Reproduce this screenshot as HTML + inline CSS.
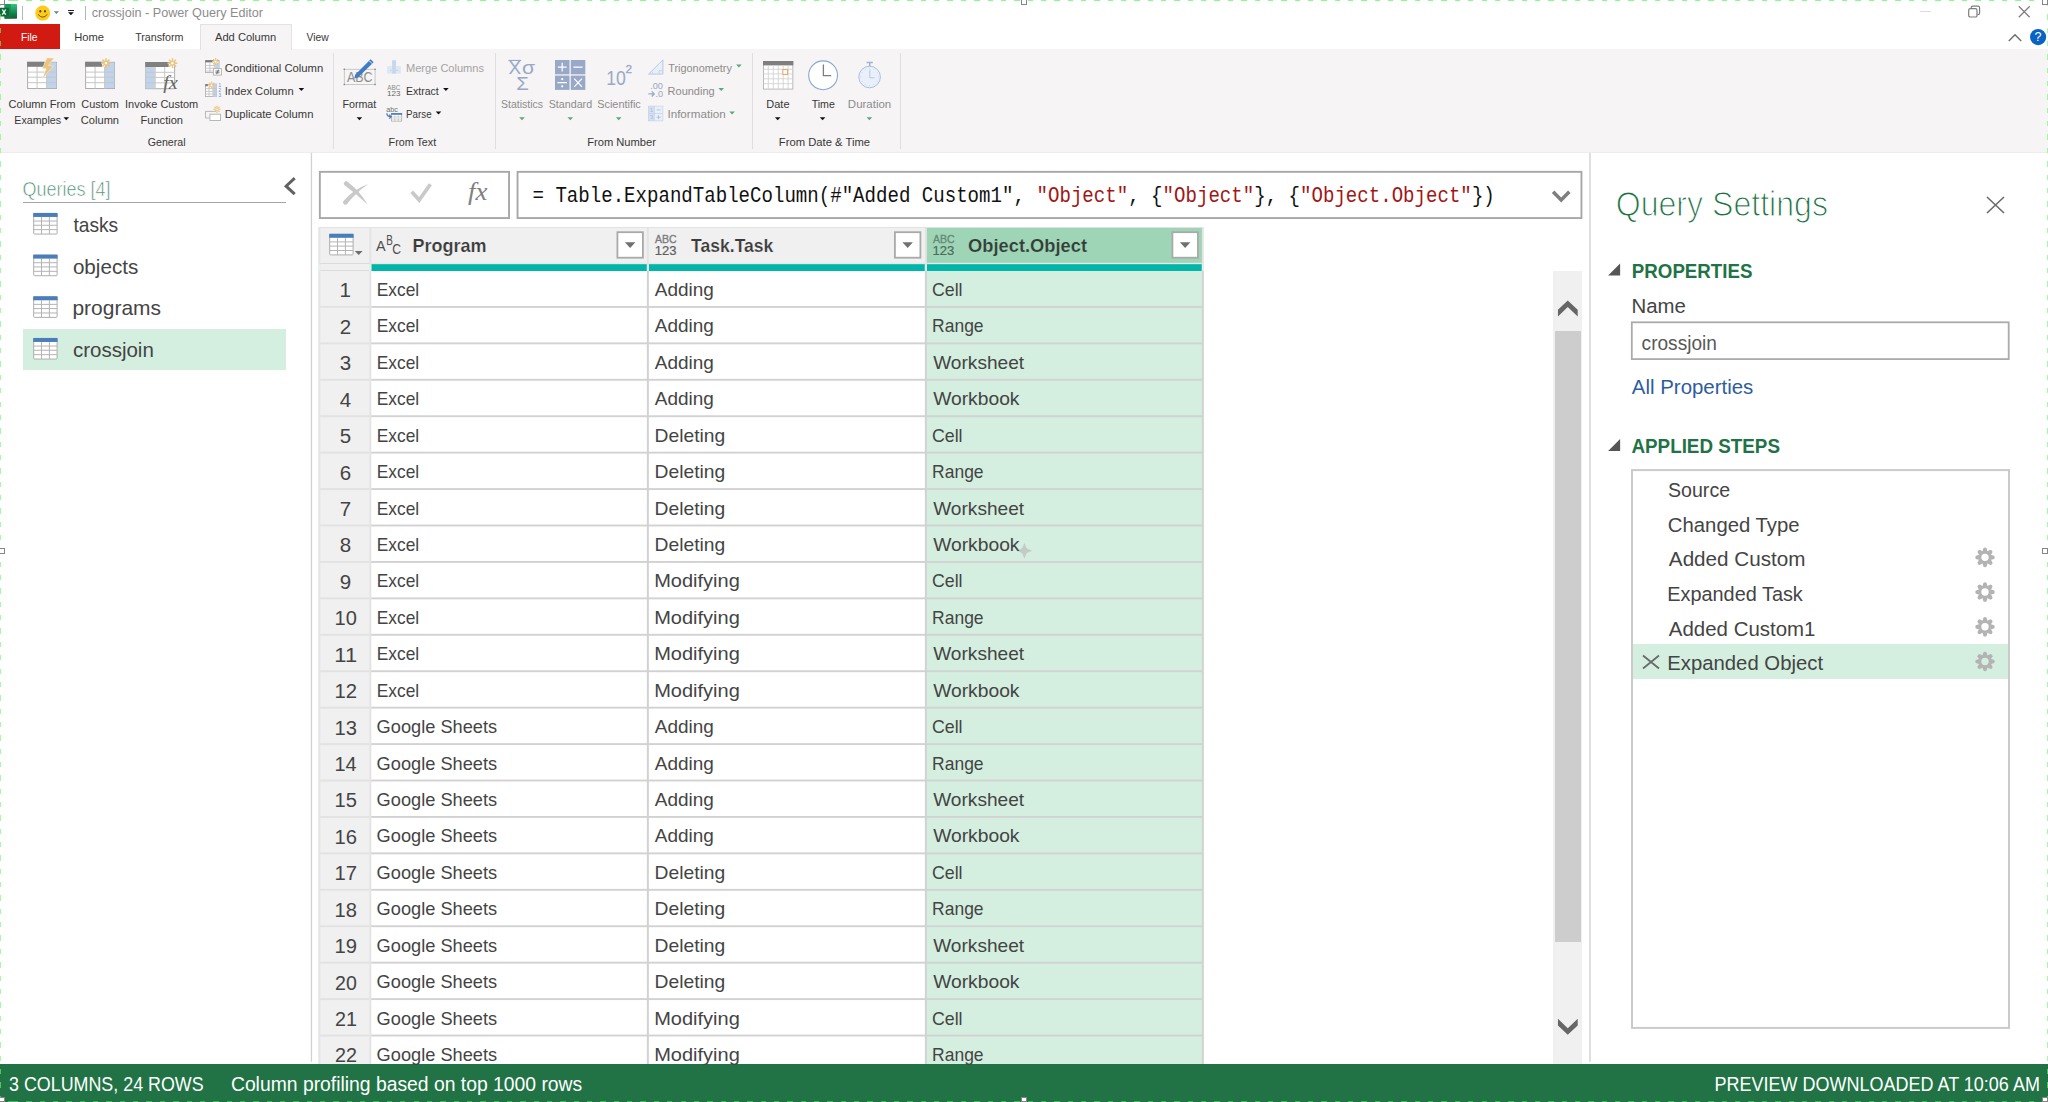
<!DOCTYPE html>
<html><head><meta charset="utf-8"><title>crossjoin - Power Query Editor</title>
<style>
html,body{margin:0;padding:0;background:#fff;}
body{width:2048px;height:1102px;position:relative;overflow:hidden;font-family:"Liberation Sans",sans-serif;}
body>div,body>svg,body>span{position:absolute;display:block;box-sizing:content-box;}
body>span{white-space:pre;line-height:1;}
svg{overflow:visible;}
</style></head>
<body>
<div style="left:0px;top:24px;width:60px;height:24.5px;background:#d11a12;"></div>
<div style="left:0px;top:49px;width:2048px;height:103px;background:#f6f4f4;"></div>
<svg style="left:0px;top:152px;" width="2049" height="2"><rect width="2048" height="0.3" fill="#f6f4f4"/></svg>
<svg style="left:0px;top:152px;" width="2049" height="2"><g transform="translate(0 0.1)"><rect width="2048" height="0.7" fill="#e9e7e7"/></g></svg>
<div style="left:199.5px;top:24px;width:90px;height:24.5px;background:#f6f4f4;border:1px solid #e3e1e1;border-bottom:none;"></div>
<div style="left:22px;top:5.5px;width:1px;height:14.5px;background:#a9bdb0;"></div>
<div style="left:85px;top:5.5px;width:1px;height:14.5px;background:#a9bdb0;"></div>
<div style="left:333.0px;top:53px;width:1px;height:95.5px;background:#e0dede;"></div>
<div style="left:494.7px;top:53px;width:1px;height:95.5px;background:#e0dede;"></div>
<div style="left:752.0px;top:53px;width:1px;height:95.5px;background:#e0dede;"></div>
<div style="left:900.1px;top:53px;width:1px;height:95.5px;background:#e0dede;"></div>
<svg style="left:63px;top:117px;" width="8" height="5"><g transform="translate(0.5 0.2)"><path d="M0 0H5.6L2.8 3Z" fill="#111"/></g></svg>
<svg style="left:298px;top:88px;" width="8" height="5"><g transform="translate(0.6 0.1)"><path d="M0 0H5.6L2.8 3Z" fill="#111"/></g></svg>
<svg style="left:356px;top:117px;" width="8" height="5"><g transform="translate(0.6 0.2)"><path d="M0 0H5.6L2.8 3Z" fill="#111"/></g></svg>
<svg style="left:443px;top:88px;" width="7" height="5"><g transform="translate(0.1 0.1)"><path d="M0 0H5.6L2.8 3Z" fill="#111"/></g></svg>
<svg style="left:435px;top:111px;" width="8" height="5"><g transform="translate(0.7 0.6)"><path d="M0 0H5.6L2.8 3Z" fill="#111"/></g></svg>
<svg style="left:519px;top:117px;" width="7" height="5"><g transform="translate(0.2 0.2)"><path d="M0 0H5.6L2.8 3Z" fill="#57a97e"/></g></svg>
<svg style="left:567px;top:117px;" width="8" height="5"><g transform="translate(0.5 0.2)"><path d="M0 0H5.6L2.8 3Z" fill="#57a97e"/></g></svg>
<svg style="left:615px;top:117px;" width="8" height="5"><g transform="translate(0.9 0.2)"><path d="M0 0H5.6L2.8 3Z" fill="#57a97e"/></g></svg>
<svg style="left:736px;top:64px;" width="7" height="5"><g transform="translate(0.1 0.4)"><path d="M0 0H5.6L2.8 3Z" fill="#57a97e"/></g></svg>
<svg style="left:718px;top:87px;" width="7" height="5"><g transform="translate(0.4 0.9)"><path d="M0 0H5.6L2.8 3Z" fill="#57a97e"/></g></svg>
<svg style="left:729px;top:111px;" width="7" height="5"><g transform="translate(0.3 0.4)"><path d="M0 0H5.6L2.8 3Z" fill="#57a97e"/></g></svg>
<svg style="left:774px;top:117px;" width="8" height="5"><g transform="translate(0.9 0.2)"><path d="M0 0H5.6L2.8 3Z" fill="#111"/></g></svg>
<svg style="left:819px;top:117px;" width="8" height="5"><g transform="translate(0.8 0.2)"><path d="M0 0H5.6L2.8 3Z" fill="#111"/></g></svg>
<svg style="left:866px;top:117px;" width="8" height="5"><g transform="translate(0.6 0.2)"><path d="M0 0H5.6L2.8 3Z" fill="#57a97e"/></g></svg>
<svg style="left:310px;top:152px;" width="4" height="911"><g transform="translate(0.8 0.8)"><rect width="1.3" height="909" fill="#d2d2d2"/></g></svg>
<svg style="left:1589px;top:152px;" width="3" height="911"><g transform="translate(0.3 0.8)"><rect width="1.4" height="909" fill="#d2d2d2"/></g></svg>
<div style="left:23px;top:202px;width:263px;height:1px;background:#a6a6a6;"></div>
<svg style="left:283px;top:177px;" width="15" height="20"><g transform="translate(0.5 0)"><path d="M11.2 1.2L2.6 9.2l8.6 8" fill="none" stroke="#626262" stroke-width="3"/></g></svg>
<div style="left:22.5px;top:328.5px;width:263.5px;height:41.5px;background:#d4efdf;"></div>
<svg style="left:33px;top:212px;" width="26" height="24"><g transform="translate(0.2 0.95)"><rect x="0.5" y="0.5" width="23.4" height="20.6" rx="0.8" fill="#fff" stroke="#adadad"/><path d="M0.5 8.1H23.9M0.5 12.3H23.9M0.5 16.7H23.9M8.3 4V21M16.2 4V21" stroke="#b4b4b4" stroke-width="1" fill="none"/><rect x="0" y="0" width="24.4" height="4" fill="#4a7ebb"/></g></svg>
<svg style="left:33px;top:254px;" width="26" height="24"><g transform="translate(0.2 0.62)"><rect x="0.5" y="0.5" width="23.4" height="20.6" rx="0.8" fill="#fff" stroke="#adadad"/><path d="M0.5 8.1H23.9M0.5 12.3H23.9M0.5 16.7H23.9M8.3 4V21M16.2 4V21" stroke="#b4b4b4" stroke-width="1" fill="none"/><rect x="0" y="0" width="24.4" height="4" fill="#4a7ebb"/></g></svg>
<svg style="left:33px;top:296px;" width="26" height="23"><g transform="translate(0.2 0.29)"><rect x="0.5" y="0.5" width="23.4" height="20.6" rx="0.8" fill="#fff" stroke="#adadad"/><path d="M0.5 8.1H23.9M0.5 12.3H23.9M0.5 16.7H23.9M8.3 4V21M16.2 4V21" stroke="#b4b4b4" stroke-width="1" fill="none"/><rect x="0" y="0" width="24.4" height="4" fill="#4a7ebb"/></g></svg>
<svg style="left:33px;top:337px;" width="26" height="24"><g transform="translate(0.2 0.96)"><rect x="0.5" y="0.5" width="23.4" height="20.6" rx="0.8" fill="#fff" stroke="#adadad"/><path d="M0.5 8.1H23.9M0.5 12.3H23.9M0.5 16.7H23.9M8.3 4V21M16.2 4V21" stroke="#b4b4b4" stroke-width="1" fill="none"/><rect x="0" y="0" width="24.4" height="4" fill="#4a7ebb"/></g></svg>
<svg style="left:318px;top:170px;" width="193" height="50"><g transform="translate(0.9 0.9)"><rect x="0.95" y="0.95" width="189.2" height="46.2" fill="#fff" stroke="#a8a8a8" stroke-width="1.9"/></g></svg>
<svg style="left:516px;top:170px;" width="1068" height="50"><g transform="translate(0.6 0.9)"><rect x="0.95" y="0.95" width="1063.8999999999999" height="46.2" fill="#fff" stroke="#a8a8a8" stroke-width="1.9"/></g></svg>
<svg style="left:340px;top:178px;" width="33" height="31"><g fill="#c9c9c9"><path d="M4.5 7.3A2.4 2.4 0 0 1 7.9 3.9Q20 13 27.8 26.8Q16 15.5 4.5 7.3Z"/><path d="M28.2 6Q13.5 11.5 3.9 22.4A2.4 2.4 0 0 0 6.9 26.2Q15.5 15 28.2 6Z"/></g></svg>
<svg style="left:408px;top:181px;" width="27" height="23"><path d="M3.7 10.7L11.2 19L22.4 3.3" stroke="#c9c9c9" stroke-width="3.7" fill="none"/></svg>
<svg style="left:1551px;top:189px;" width="22" height="15"><path d="M2.1 2.7L10.2 10.95L18.3 2.7" stroke="#7f7f7f" stroke-width="3.5" fill="none"/></svg>
<div style="left:319.5px;top:227px;width:606.5px;height:37px;background:#f0f0f0;"></div>
<div style="left:926px;top:227px;width:277px;height:37px;background:#9fd5b7;"></div>
<div style="left:319.5px;top:264px;width:51.0px;height:800px;background:#f0f0f0;"></div>
<div style="left:926px;top:264px;width:277px;height:800px;background:#d4efdf;"></div>
<div style="left:370.5px;top:264px;width:832.5px;height:6.8px;background:#01b5a8;"></div>
<svg style="left:370px;top:262px;" width="834" height="4"><g transform="translate(0.5 0.8)"><rect width="832.5" height="1.4" fill="#e7e7e7"/></g></svg>
<div style="left:319.5px;top:263px;width:51.0px;height:1.3px;background:#dcdcdc;"></div>
<div style="left:319.5px;top:269.8px;width:51.0px;height:1.3px;background:#dcdcdc;"></div>
<svg style="left:370px;top:305px;" width="834" height="4"><g transform="translate(0.5 0.98)"><rect width="832.5" height="1.9" fill="#d2d2d2"/></g></svg>
<svg style="left:319px;top:305px;" width="53" height="4"><g transform="translate(0.5 0.98)"><rect width="51.0" height="1.9" fill="#e2e2e2"/></g></svg>
<svg style="left:370px;top:342px;" width="834" height="4"><g transform="translate(0.5 0.41)"><rect width="832.5" height="1.9" fill="#d2d2d2"/></g></svg>
<svg style="left:319px;top:342px;" width="53" height="4"><g transform="translate(0.5 0.41)"><rect width="51.0" height="1.9" fill="#e2e2e2"/></g></svg>
<svg style="left:370px;top:378px;" width="834" height="4"><g transform="translate(0.5 0.84)"><rect width="832.5" height="1.9" fill="#d2d2d2"/></g></svg>
<svg style="left:319px;top:378px;" width="53" height="4"><g transform="translate(0.5 0.84)"><rect width="51.0" height="1.9" fill="#e2e2e2"/></g></svg>
<svg style="left:370px;top:415px;" width="834" height="4"><g transform="translate(0.5 0.27)"><rect width="832.5" height="1.9" fill="#d2d2d2"/></g></svg>
<svg style="left:319px;top:415px;" width="53" height="4"><g transform="translate(0.5 0.27)"><rect width="51.0" height="1.9" fill="#e2e2e2"/></g></svg>
<svg style="left:370px;top:451px;" width="834" height="4"><g transform="translate(0.5 0.7)"><rect width="832.5" height="1.9" fill="#d2d2d2"/></g></svg>
<svg style="left:319px;top:451px;" width="53" height="4"><g transform="translate(0.5 0.7)"><rect width="51.0" height="1.9" fill="#e2e2e2"/></g></svg>
<svg style="left:370px;top:488px;" width="834" height="4"><g transform="translate(0.5 0.13)"><rect width="832.5" height="1.9" fill="#d2d2d2"/></g></svg>
<svg style="left:319px;top:488px;" width="53" height="4"><g transform="translate(0.5 0.13)"><rect width="51.0" height="1.9" fill="#e2e2e2"/></g></svg>
<svg style="left:370px;top:524px;" width="834" height="4"><g transform="translate(0.5 0.56)"><rect width="832.5" height="1.9" fill="#d2d2d2"/></g></svg>
<svg style="left:319px;top:524px;" width="53" height="4"><g transform="translate(0.5 0.56)"><rect width="51.0" height="1.9" fill="#e2e2e2"/></g></svg>
<svg style="left:370px;top:560px;" width="834" height="4"><g transform="translate(0.5 0.99)"><rect width="832.5" height="1.9" fill="#d2d2d2"/></g></svg>
<svg style="left:319px;top:560px;" width="53" height="4"><g transform="translate(0.5 0.99)"><rect width="51.0" height="1.9" fill="#e2e2e2"/></g></svg>
<svg style="left:370px;top:597px;" width="834" height="4"><g transform="translate(0.5 0.42)"><rect width="832.5" height="1.9" fill="#d2d2d2"/></g></svg>
<svg style="left:319px;top:597px;" width="53" height="4"><g transform="translate(0.5 0.42)"><rect width="51.0" height="1.9" fill="#e2e2e2"/></g></svg>
<svg style="left:370px;top:633px;" width="834" height="4"><g transform="translate(0.5 0.85)"><rect width="832.5" height="1.9" fill="#d2d2d2"/></g></svg>
<svg style="left:319px;top:633px;" width="53" height="4"><g transform="translate(0.5 0.85)"><rect width="51.0" height="1.9" fill="#e2e2e2"/></g></svg>
<svg style="left:370px;top:670px;" width="834" height="4"><g transform="translate(0.5 0.28)"><rect width="832.5" height="1.9" fill="#d2d2d2"/></g></svg>
<svg style="left:319px;top:670px;" width="53" height="4"><g transform="translate(0.5 0.28)"><rect width="51.0" height="1.9" fill="#e2e2e2"/></g></svg>
<svg style="left:370px;top:706px;" width="834" height="4"><g transform="translate(0.5 0.71)"><rect width="832.5" height="1.9" fill="#d2d2d2"/></g></svg>
<svg style="left:319px;top:706px;" width="53" height="4"><g transform="translate(0.5 0.71)"><rect width="51.0" height="1.9" fill="#e2e2e2"/></g></svg>
<svg style="left:370px;top:743px;" width="834" height="4"><g transform="translate(0.5 0.14)"><rect width="832.5" height="1.9" fill="#d2d2d2"/></g></svg>
<svg style="left:319px;top:743px;" width="53" height="4"><g transform="translate(0.5 0.14)"><rect width="51.0" height="1.9" fill="#e2e2e2"/></g></svg>
<svg style="left:370px;top:779px;" width="834" height="4"><g transform="translate(0.5 0.57)"><rect width="832.5" height="1.9" fill="#d2d2d2"/></g></svg>
<svg style="left:319px;top:779px;" width="53" height="4"><g transform="translate(0.5 0.57)"><rect width="51.0" height="1.9" fill="#e2e2e2"/></g></svg>
<svg style="left:370px;top:815px;" width="834" height="4"><g transform="translate(0.5 1.0)"><rect width="832.5" height="1.9" fill="#d2d2d2"/></g></svg>
<svg style="left:319px;top:815px;" width="53" height="4"><g transform="translate(0.5 1.0)"><rect width="51.0" height="1.9" fill="#e2e2e2"/></g></svg>
<svg style="left:370px;top:852px;" width="834" height="4"><g transform="translate(0.5 0.43)"><rect width="832.5" height="1.9" fill="#d2d2d2"/></g></svg>
<svg style="left:319px;top:852px;" width="53" height="4"><g transform="translate(0.5 0.43)"><rect width="51.0" height="1.9" fill="#e2e2e2"/></g></svg>
<svg style="left:370px;top:888px;" width="834" height="4"><g transform="translate(0.5 0.86)"><rect width="832.5" height="1.9" fill="#d2d2d2"/></g></svg>
<svg style="left:319px;top:888px;" width="53" height="4"><g transform="translate(0.5 0.86)"><rect width="51.0" height="1.9" fill="#e2e2e2"/></g></svg>
<svg style="left:370px;top:925px;" width="834" height="4"><g transform="translate(0.5 0.29)"><rect width="832.5" height="1.9" fill="#d2d2d2"/></g></svg>
<svg style="left:319px;top:925px;" width="53" height="4"><g transform="translate(0.5 0.29)"><rect width="51.0" height="1.9" fill="#e2e2e2"/></g></svg>
<svg style="left:370px;top:961px;" width="834" height="4"><g transform="translate(0.5 0.72)"><rect width="832.5" height="1.9" fill="#d2d2d2"/></g></svg>
<svg style="left:319px;top:961px;" width="53" height="4"><g transform="translate(0.5 0.72)"><rect width="51.0" height="1.9" fill="#e2e2e2"/></g></svg>
<svg style="left:370px;top:998px;" width="834" height="4"><g transform="translate(0.5 0.15)"><rect width="832.5" height="1.9" fill="#d2d2d2"/></g></svg>
<svg style="left:319px;top:998px;" width="53" height="4"><g transform="translate(0.5 0.15)"><rect width="51.0" height="1.9" fill="#e2e2e2"/></g></svg>
<svg style="left:370px;top:1034px;" width="834" height="4"><g transform="translate(0.5 0.58)"><rect width="832.5" height="1.9" fill="#d2d2d2"/></g></svg>
<svg style="left:319px;top:1034px;" width="53" height="4"><g transform="translate(0.5 0.58)"><rect width="51.0" height="1.9" fill="#e2e2e2"/></g></svg>
<svg style="left:370px;top:1071px;" width="834" height="3"><g transform="translate(0.5 0.01)"><rect width="832.5" height="1.9" fill="#d2d2d2"/></g></svg>
<svg style="left:319px;top:1071px;" width="53" height="3"><g transform="translate(0.5 0.01)"><rect width="51.0" height="1.9" fill="#e2e2e2"/></g></svg>
<svg style="left:318px;top:264px;" width="4" height="801"><g transform="translate(0.35 0)"><rect width="2" height="800" fill="#e4e4e4"/></g></svg>
<svg style="left:318px;top:227px;" width="4" height="38"><g transform="translate(0.35 0)"><rect width="2" height="37" fill="#e4e4e4"/></g></svg>
<svg style="left:318px;top:264px;" width="4" height="8"><g transform="translate(0.35 0.2)"><rect width="2" height="6.6" fill="#e6f1ef"/></g></svg>
<svg style="left:369px;top:264px;" width="4" height="801"><g transform="translate(0.35 0)"><rect width="2" height="800" fill="#e4e4e4"/></g></svg>
<svg style="left:369px;top:227px;" width="4" height="38"><g transform="translate(0.35 0)"><rect width="2" height="37" fill="#e4e4e4"/></g></svg>
<svg style="left:369px;top:264px;" width="4" height="8"><g transform="translate(0.35 0.2)"><rect width="2" height="6.6" fill="#e6f1ef"/></g></svg>
<svg style="left:646px;top:264px;" width="4" height="801"><g transform="translate(0.85 0)"><rect width="2" height="800" fill="#d2d2d2"/></g></svg>
<svg style="left:646px;top:227px;" width="4" height="38"><g transform="translate(0.85 0)"><rect width="2" height="37" fill="#e4e4e4"/></g></svg>
<svg style="left:646px;top:264px;" width="4" height="8"><g transform="translate(0.85 0.2)"><rect width="2" height="6.6" fill="#e6f1ef"/></g></svg>
<svg style="left:924px;top:264px;" width="4" height="801"><g transform="translate(0.85 0)"><rect width="2" height="800" fill="#d2d2d2"/></g></svg>
<svg style="left:924px;top:227px;" width="4" height="38"><g transform="translate(0.85 0)"><rect width="2" height="37" fill="#e4e4e4"/></g></svg>
<svg style="left:924px;top:264px;" width="4" height="8"><g transform="translate(0.85 0.2)"><rect width="2" height="6.6" fill="#e6f1ef"/></g></svg>
<svg style="left:1201px;top:264px;" width="4" height="801"><g transform="translate(0.85 0)"><rect width="2" height="800" fill="#d2d2d2"/></g></svg>
<svg style="left:1201px;top:227px;" width="4" height="38"><g transform="translate(0.85 0)"><rect width="2" height="37" fill="#e4e4e4"/></g></svg>
<svg style="left:1201px;top:264px;" width="4" height="8"><g transform="translate(0.85 0.2)"><rect width="2" height="6.6" fill="#e6f1ef"/></g></svg>
<div style="left:319.5px;top:226.5px;width:883.5px;height:1.2px;background:#e2e2e2;"></div>
<svg style="left:616px;top:231px;" width="29" height="29"><g transform="translate(0.5 0.3)"><rect x="0.9" y="0.9" width="25.5" height="25.5" fill="#fff" stroke="#a9a9a9" stroke-width="1.8"/></g></svg>
<svg style="left:624px;top:242px;" width="13" height="8"><g transform="translate(0.9 0.3)"><path d="M0 0H10.5L5.25 5.8Z" fill="#707070"/></g></svg>
<svg style="left:894px;top:231px;" width="29" height="29"><g transform="translate(0 0.3)"><rect x="0.9" y="0.9" width="25.5" height="25.5" fill="#fff" stroke="#a9a9a9" stroke-width="1.8"/></g></svg>
<svg style="left:902px;top:242px;" width="12" height="8"><g transform="translate(0.4 0.3)"><path d="M0 0H10.5L5.25 5.8Z" fill="#707070"/></g></svg>
<svg style="left:1171px;top:231px;" width="29" height="29"><g transform="translate(0.5 0.3)"><rect x="0.9" y="0.9" width="25.5" height="25.5" fill="#fff" stroke="#a9a9a9" stroke-width="1.8"/></g></svg>
<svg style="left:1179px;top:242px;" width="13" height="8"><g transform="translate(0.9 0.3)"><path d="M0 0H10.5L5.25 5.8Z" fill="#707070"/></g></svg>
<div style="left:1553.2px;top:271px;width:29px;height:793px;background:#f0f0f0;"></div>
<div style="left:1555px;top:330.6px;width:25.8px;height:611.1px;background:#cdcdcd;"></div>
<svg style="left:1557px;top:300px;" width="22" height="18"><path d="M10.75 0.6L20.7 9.8V16.5L10.75 6.9L0.96 16.5V9.8Z" fill="#666"/></svg>
<svg style="left:1557px;top:1018px;" width="22" height="18"><path d="M10.75 16.7L20.7 7.5V0.7L10.75 10.2L0.96 0.7V7.5Z" fill="#666"/></svg>
<div style="left:0px;top:1063.7px;width:2048px;height:38.3px;background:#217346;"></div>
<svg style="left:1986px;top:196px;" width="20" height="19"><path d="M1 1L18 17M18 1L1 17" stroke="#6a6a6a" stroke-width="1.6" fill="none"/></svg>
<svg style="left:1608px;top:263px;" width="14" height="14"><g transform="translate(0.1 0.6)"><path d="M12 0V12H0Z" fill="#555"/></g></svg>
<svg style="left:1608px;top:438px;" width="14" height="14"><g transform="translate(0.1 0.9)"><path d="M12 0V12H0Z" fill="#555"/></g></svg>
<svg style="left:1630px;top:321px;" width="381" height="40"><g transform="translate(0.9 0.4)"><rect x="0.9" y="0.9" width="376.9" height="36.800000000000004" fill="#fff" stroke="#ababab" stroke-width="1.8"/></g></svg>
<svg style="left:1631px;top:469px;" width="380" height="561"><g transform="translate(0 0.1)"><rect x="1.0" y="1.0" width="377" height="557.8" fill="#fff" stroke="#cacaca" stroke-width="2"/></g></svg>
<div style="left:1633px;top:644px;width:375px;height:35px;background:#d4efdf;"></div>
<svg style="left:1642px;top:654px;" width="19" height="17"><g transform="translate(0 0.5)"><path d="M1 1L17 14M17 1L1 14" stroke="#6a6a6a" stroke-width="1.8" fill="none"/></g></svg>
<svg style="left:1974px;top:546px;" width="23" height="24"><g transform="translate(0 0.35)"><g transform="translate(11 11)" fill="#b3b3b3"><path d="M-2.7 -5.4L-1.6 -9.1Q0 -10.5 1.6 -9.1L2.7 -5.4Z" transform="rotate(0)"/><path d="M-2.7 -5.4L-1.6 -9.1Q0 -10.5 1.6 -9.1L2.7 -5.4Z" transform="rotate(45)"/><path d="M-2.7 -5.4L-1.6 -9.1Q0 -10.5 1.6 -9.1L2.7 -5.4Z" transform="rotate(90)"/><path d="M-2.7 -5.4L-1.6 -9.1Q0 -10.5 1.6 -9.1L2.7 -5.4Z" transform="rotate(135)"/><path d="M-2.7 -5.4L-1.6 -9.1Q0 -10.5 1.6 -9.1L2.7 -5.4Z" transform="rotate(180)"/><path d="M-2.7 -5.4L-1.6 -9.1Q0 -10.5 1.6 -9.1L2.7 -5.4Z" transform="rotate(225)"/><path d="M-2.7 -5.4L-1.6 -9.1Q0 -10.5 1.6 -9.1L2.7 -5.4Z" transform="rotate(270)"/><path d="M-2.7 -5.4L-1.6 -9.1Q0 -10.5 1.6 -9.1L2.7 -5.4Z" transform="rotate(315)"/><path fill-rule="evenodd" d="M0 -6.2A6.2 6.2 0 1 1 0 6.2A6.2 6.2 0 1 1 0 -6.2ZM0 -3.7A3.7 3.7 0 1 0 0 3.7A3.7 3.7 0 1 0 0 -3.7Z"/></g></g></svg>
<svg style="left:1974px;top:581px;" width="23" height="24"><g transform="translate(0 0.07)"><g transform="translate(11 11)" fill="#b3b3b3"><path d="M-2.7 -5.4L-1.6 -9.1Q0 -10.5 1.6 -9.1L2.7 -5.4Z" transform="rotate(0)"/><path d="M-2.7 -5.4L-1.6 -9.1Q0 -10.5 1.6 -9.1L2.7 -5.4Z" transform="rotate(45)"/><path d="M-2.7 -5.4L-1.6 -9.1Q0 -10.5 1.6 -9.1L2.7 -5.4Z" transform="rotate(90)"/><path d="M-2.7 -5.4L-1.6 -9.1Q0 -10.5 1.6 -9.1L2.7 -5.4Z" transform="rotate(135)"/><path d="M-2.7 -5.4L-1.6 -9.1Q0 -10.5 1.6 -9.1L2.7 -5.4Z" transform="rotate(180)"/><path d="M-2.7 -5.4L-1.6 -9.1Q0 -10.5 1.6 -9.1L2.7 -5.4Z" transform="rotate(225)"/><path d="M-2.7 -5.4L-1.6 -9.1Q0 -10.5 1.6 -9.1L2.7 -5.4Z" transform="rotate(270)"/><path d="M-2.7 -5.4L-1.6 -9.1Q0 -10.5 1.6 -9.1L2.7 -5.4Z" transform="rotate(315)"/><path fill-rule="evenodd" d="M0 -6.2A6.2 6.2 0 1 1 0 6.2A6.2 6.2 0 1 1 0 -6.2ZM0 -3.7A3.7 3.7 0 1 0 0 3.7A3.7 3.7 0 1 0 0 -3.7Z"/></g></g></svg>
<svg style="left:1974px;top:615px;" width="23" height="24"><g transform="translate(0 0.79)"><g transform="translate(11 11)" fill="#b3b3b3"><path d="M-2.7 -5.4L-1.6 -9.1Q0 -10.5 1.6 -9.1L2.7 -5.4Z" transform="rotate(0)"/><path d="M-2.7 -5.4L-1.6 -9.1Q0 -10.5 1.6 -9.1L2.7 -5.4Z" transform="rotate(45)"/><path d="M-2.7 -5.4L-1.6 -9.1Q0 -10.5 1.6 -9.1L2.7 -5.4Z" transform="rotate(90)"/><path d="M-2.7 -5.4L-1.6 -9.1Q0 -10.5 1.6 -9.1L2.7 -5.4Z" transform="rotate(135)"/><path d="M-2.7 -5.4L-1.6 -9.1Q0 -10.5 1.6 -9.1L2.7 -5.4Z" transform="rotate(180)"/><path d="M-2.7 -5.4L-1.6 -9.1Q0 -10.5 1.6 -9.1L2.7 -5.4Z" transform="rotate(225)"/><path d="M-2.7 -5.4L-1.6 -9.1Q0 -10.5 1.6 -9.1L2.7 -5.4Z" transform="rotate(270)"/><path d="M-2.7 -5.4L-1.6 -9.1Q0 -10.5 1.6 -9.1L2.7 -5.4Z" transform="rotate(315)"/><path fill-rule="evenodd" d="M0 -6.2A6.2 6.2 0 1 1 0 6.2A6.2 6.2 0 1 1 0 -6.2ZM0 -3.7A3.7 3.7 0 1 0 0 3.7A3.7 3.7 0 1 0 0 -3.7Z"/></g></g></svg>
<svg style="left:1974px;top:650px;" width="23" height="24"><g transform="translate(0 0.51)"><g transform="translate(11 11)" fill="#b3b3b3"><path d="M-2.7 -5.4L-1.6 -9.1Q0 -10.5 1.6 -9.1L2.7 -5.4Z" transform="rotate(0)"/><path d="M-2.7 -5.4L-1.6 -9.1Q0 -10.5 1.6 -9.1L2.7 -5.4Z" transform="rotate(45)"/><path d="M-2.7 -5.4L-1.6 -9.1Q0 -10.5 1.6 -9.1L2.7 -5.4Z" transform="rotate(90)"/><path d="M-2.7 -5.4L-1.6 -9.1Q0 -10.5 1.6 -9.1L2.7 -5.4Z" transform="rotate(135)"/><path d="M-2.7 -5.4L-1.6 -9.1Q0 -10.5 1.6 -9.1L2.7 -5.4Z" transform="rotate(180)"/><path d="M-2.7 -5.4L-1.6 -9.1Q0 -10.5 1.6 -9.1L2.7 -5.4Z" transform="rotate(225)"/><path d="M-2.7 -5.4L-1.6 -9.1Q0 -10.5 1.6 -9.1L2.7 -5.4Z" transform="rotate(270)"/><path d="M-2.7 -5.4L-1.6 -9.1Q0 -10.5 1.6 -9.1L2.7 -5.4Z" transform="rotate(315)"/><path fill-rule="evenodd" d="M0 -6.2A6.2 6.2 0 1 1 0 6.2A6.2 6.2 0 1 1 0 -6.2ZM0 -3.7A3.7 3.7 0 1 0 0 3.7A3.7 3.7 0 1 0 0 -3.7Z"/></g></g></svg>
<svg style="left:0px;top:3px;" width="19" height="18"><g transform="translate(0 0.5)"><defs><linearGradient id="xg" x1="0" y1="0" x2="0" y2="1"><stop offset="0" stop-color="#33c481"/><stop offset="0.35" stop-color="#21a366"/><stop offset="0.7" stop-color="#107c41"/><stop offset="1" stop-color="#185c37"/></linearGradient></defs><rect x="4.4" y="0.5" width="12.6" height="14.8" rx="0.8" fill="url(#xg)"/><rect x="4.4" y="0.5" width="6.3" height="14.8" fill="#107c41" opacity="0.55"/><rect x="-2" y="4.2" width="11" height="8.8" rx="0.8" fill="#0e6b38"/><path d="M2.3 6l3.4 5.2M5.7 6L2.3 11.2" stroke="#fff" stroke-width="1.3" fill="none"/></g></svg>
<svg style="left:35px;top:5px;" width="17" height="18"><g transform="translate(0 0.5)"><circle cx="7.7" cy="7.6" r="7.5" fill="#ffcb17"/><ellipse cx="5.3" cy="5.7" rx="1" ry="1.3" fill="#4b4a55"/><ellipse cx="10" cy="5.7" rx="1" ry="1.3" fill="#4b4a55"/><path d="M3 8.8Q7.7 14.5 12.4 8.8" stroke="#6b5a20" stroke-width="1" fill="none"/></g></svg>
<svg style="left:53px;top:11px;" width="7" height="4"><g transform="translate(0.8 0.2)"><path d="M0 0H5.2L2.6 2.8Z" fill="#5d8c74"/></g></svg>
<div style="left:68px;top:10px;width:5.8px;height:1.1px;background:#222;"></div>
<svg style="left:68px;top:12px;" width="7" height="5"><g transform="translate(0.0 0.3)"><path d="M0 0H5.8L2.9 3Z" fill="#111"/></g></svg>
<div style="left:1920px;top:10.6px;width:11px;height:1px;background:#dcdcdc;"></div>
<svg style="left:1968px;top:5px;" width="14" height="14"><g transform="translate(0 0.5)"><rect x="0.7" y="3.2" width="8.3" height="8.3" rx="1.6" fill="none" stroke="#7d7d7d" stroke-width="1.2"/><path d="M3.2 3V2.3Q3.2 0.7 4.8 0.7H10Q11.6 0.7 11.6 2.3V7.5Q11.6 9.1 10 9.1H9.3" fill="none" stroke="#7d7d7d" stroke-width="1.2"/></g></svg>
<svg style="left:2018px;top:5px;" width="14" height="14"><g transform="translate(0 0.5)"><path d="M0.8 0.8L11.7 11.7M11.7 0.8L0.8 11.7" stroke="#7d7d7d" stroke-width="1.25" fill="none"/></g></svg>
<svg style="left:2008px;top:33px;" width="15" height="10"><g transform="translate(0 0.5)"><path d="M0.8 7.5L7 1.2L13.2 7.5" stroke="#6d6d6d" stroke-width="1.4" fill="none"/></g></svg>
<svg style="left:2030px;top:29px;" width="18" height="18"><circle cx="8.1" cy="8.1" r="8.1" fill="#0a63c4"/><text x="8.1" y="12.3" text-anchor="middle" font-size="12.5" fill="#fff" font-family="'Liberation Sans',sans-serif">?</text></svg>
<svg style="left:329px;top:233px;" width="26" height="24"><g transform="translate(0.2 0.8)"><rect x="0.5" y="0.5" width="23.4" height="20.6" rx="0.8" fill="#fff" stroke="#adadad"/><path d="M0.5 8.1H23.9M0.5 12.3H23.9M0.5 16.7H23.9M8.3 4V21M16.2 4V21" stroke="#b4b4b4" stroke-width="1" fill="none"/><rect x="0" y="0" width="24.4" height="4" fill="#4a7ebb"/></g></svg>
<svg style="left:354px;top:250px;" width="10" height="7"><g transform="translate(0.8 0.9)"><path d="M0 0H7.8L3.9 4.2Z" fill="#6d6d6d"/></g></svg>
<svg style="left:375px;top:232px;" width="28" height="27"><g font-family="'Liberation Sans',sans-serif" fill="#4e4e4e"><text x="1" y="18.6" font-size="14.6" textLength="9.6" lengthAdjust="spacingAndGlyphs">A</text><text x="11.2" y="13" font-size="13.8" textLength="6.6" lengthAdjust="spacingAndGlyphs">B</text><text x="17.2" y="22.3" font-size="14.8" textLength="8.8" lengthAdjust="spacingAndGlyphs">C</text></g></svg>
<svg style="left:654px;top:235px;" width="26" height="23"><g transform="translate(0.6 0.6)"><g font-family="'Liberation Sans',sans-serif"><text x="0.5" y="7.8" font-size="10.7" fill="#7c7c7c" stroke="#7c7c7c" stroke-width="0.35" textLength="21.6" lengthAdjust="spacingAndGlyphs">ABC</text><text x="0.2" y="19.4" font-size="13.4" fill="#5e5e5e" stroke="#5e5e5e" stroke-width="0.2" textLength="21.8" lengthAdjust="spacingAndGlyphs">123</text></g></g></svg>
<svg style="left:932px;top:235px;" width="26" height="23"><g transform="translate(0.4 0.6)"><g font-family="'Liberation Sans',sans-serif"><text x="0.5" y="7.8" font-size="10.7" fill="#668a76" stroke="#668a76" stroke-width="0.35" textLength="21.6" lengthAdjust="spacingAndGlyphs">ABC</text><text x="0.2" y="19.4" font-size="13.4" fill="#4c6b5a" stroke="#4c6b5a" stroke-width="0.2" textLength="21.8" lengthAdjust="spacingAndGlyphs">123</text></g></g></svg>
<svg style="left:27px;top:61px;" width="32" height="29"><g transform="translate(0.1 0.8)"><rect x="0.5" y="0.5" width="28.9" height="26.2" fill="#fff" stroke="#adadad"/><rect x="19.9" y="0.9" width="9.399999999999999" height="25.4" fill="#c0d3ea"/><path d="M0.5 10.3H29.4M0.5 15.4H29.4M0.5 20.9H29.4M10 4.9V26.7M19.5 4.9V26.7" stroke="#c6c6c6" stroke-width="1" fill="none"/><rect x="0" y="0" width="17.5" height="5" fill="#808080"/><path d="M19.7 -3.8H26.9L21.3 3.7L26.3 4.2L15.3 16.9L19.1 6.9L15.3 6.7Z" fill="#ebc47f" stroke="#f8f1e6" stroke-width="0.5"/></g></svg>
<svg style="left:85px;top:61px;" width="32" height="29"><g transform="translate(0.1 0.8)"><rect x="0.5" y="0.5" width="28.9" height="26.2" fill="#fff" stroke="#adadad"/><rect x="19.9" y="0.9" width="9.399999999999999" height="25.4" fill="#c0d3ea"/><path d="M0.5 10.3H29.4M0.5 15.4H29.4M0.5 20.9H29.4M10 4.9V26.7M19.5 4.9V26.7" stroke="#c6c6c6" stroke-width="1" fill="none"/><rect x="0" y="0" width="17" height="5" fill="#808080"/><g transform="translate(20.85 1.3)" stroke="#ebc47f" stroke-width="1.5" fill="none"><path d="M0 -2.1V-4.9" transform="rotate(0)"/><path d="M0 -2.1V-4.9" transform="rotate(45)"/><path d="M0 -2.1V-4.9" transform="rotate(90)"/><path d="M0 -2.1V-4.9" transform="rotate(135)"/><path d="M0 -2.1V-4.9" transform="rotate(180)"/><path d="M0 -2.1V-4.9" transform="rotate(225)"/><path d="M0 -2.1V-4.9" transform="rotate(270)"/><path d="M0 -2.1V-4.9" transform="rotate(315)"/><circle r="1.9000000000000001" fill="#fff" stroke-width="1.2000000000000002"/></g></g></svg>
<svg style="left:145px;top:62px;" width="32" height="28"><g transform="translate(0.2 0)"><rect x="0.5" y="0.5" width="28.9" height="26.2" fill="#fff" stroke="#adadad"/><rect x="0.4" y="0.9" width="9.2" height="25.4" fill="#c0d3ea"/><path d="M0.5 10.3H29.4M0.5 15.4H29.4M0.5 20.9H29.4M10 4.9V26.7M19.5 4.9V26.7" stroke="#c6c6c6" stroke-width="1" fill="none"/><rect x="0" y="0" width="23.5" height="5" fill="#808080"/><g transform="translate(27.3 1.2)" stroke="#ebc47f" stroke-width="1.5" fill="none"><path d="M0 -2.1V-4.9" transform="rotate(0)"/><path d="M0 -2.1V-4.9" transform="rotate(45)"/><path d="M0 -2.1V-4.9" transform="rotate(90)"/><path d="M0 -2.1V-4.9" transform="rotate(135)"/><path d="M0 -2.1V-4.9" transform="rotate(180)"/><path d="M0 -2.1V-4.9" transform="rotate(225)"/><path d="M0 -2.1V-4.9" transform="rotate(270)"/><path d="M0 -2.1V-4.9" transform="rotate(315)"/><circle r="1.9000000000000001" fill="#fff" stroke-width="1.2000000000000002"/></g><text x="18" y="26.5" font-size="19.5" font-style="italic" fill="#666" font-family="'Liberation Serif',serif" textLength="14.6" lengthAdjust="spacingAndGlyphs">fx</text></g></svg>
<svg style="left:205px;top:58px;" width="19" height="19"><rect x="0.5" y="2.5" width="13.5" height="12" fill="#fff" stroke="#b8b8b8"/><rect x="0.3" y="2.2" width="7.5" height="2.2" fill="#7a7a7a"/><path d="M0.5 7.4H14M0.5 10.3H14M0.5 13H14M4.9 4.4V14.5M9.3 4.4V14.5" stroke="#c4c4c4" stroke-width="0.9" fill="none"/><rect x="10.2" y="5.5" width="3.8" height="4.6" fill="#bed2ea"/><g transform="translate(10.6 3.6)" stroke="#ebc47f" stroke-width="1.1" fill="none"><path d="M0 -1.5V-3.6" transform="rotate(0)"/><path d="M0 -1.5V-3.6" transform="rotate(45)"/><path d="M0 -1.5V-3.6" transform="rotate(90)"/><path d="M0 -1.5V-3.6" transform="rotate(135)"/><path d="M0 -1.5V-3.6" transform="rotate(180)"/><path d="M0 -1.5V-3.6" transform="rotate(225)"/><path d="M0 -1.5V-3.6" transform="rotate(270)"/><path d="M0 -1.5V-3.6" transform="rotate(315)"/><circle r="1.3" fill="#fff" stroke-width="0.8800000000000001"/></g><rect x="8.4" y="10.6" width="8" height="6.5" fill="#fff" stroke="#b0b0b0" stroke-width="0.9"/><path d="M10.4 13H14.6M10.4 14.8H14.6M13.5 11.6L11.5 16.2" stroke="#555" stroke-width="0.8" fill="none"/></svg>
<svg style="left:205px;top:82px;" width="19" height="17"><rect x="0.5" y="2.5" width="11" height="12" fill="#fff" stroke="#b8b8b8"/><rect x="8.2" y="1.2" width="3.6" height="13.6" fill="#bed2ea"/><rect x="0.3" y="2.2" width="2.6" height="2" fill="#7a7a7a"/><path d="M0.5 6.6H11.5M0.5 9.4H11.5M0.5 12H11.5M4 4.4V14.5M7.9 1.5V14.5" stroke="#c4c4c4" stroke-width="0.9" fill="none"/><g transform="translate(6.5 3.2)" stroke="#ebc47f" stroke-width="1.1" fill="none"><path d="M0 -1.5V-3.6" transform="rotate(0)"/><path d="M0 -1.5V-3.6" transform="rotate(45)"/><path d="M0 -1.5V-3.6" transform="rotate(90)"/><path d="M0 -1.5V-3.6" transform="rotate(135)"/><path d="M0 -1.5V-3.6" transform="rotate(180)"/><path d="M0 -1.5V-3.6" transform="rotate(225)"/><path d="M0 -1.5V-3.6" transform="rotate(270)"/><path d="M0 -1.5V-3.6" transform="rotate(315)"/><circle r="1.3" fill="#fff" stroke-width="0.8800000000000001"/></g><g font-family="'Liberation Sans',sans-serif" font-size="4.6" fill="#5b8bd0"><text x="13.6" y="5.2">1</text><text x="13.6" y="10">2</text><text x="13.6" y="14.8">3</text></g></svg>
<svg style="left:205px;top:106px;" width="19" height="17"><path d="M4.4 12H0.5V5.4H11" fill="none" stroke="#b0b0b0" stroke-width="0.9"/><rect x="4.9" y="8.2" width="10.6" height="6.3" fill="#fff" stroke="#b0b0b0" stroke-width="0.9"/><g transform="translate(12 3.3)" stroke="#ebc47f" stroke-width="1.1" fill="none"><path d="M0 -1.5V-3.6" transform="rotate(0)"/><path d="M0 -1.5V-3.6" transform="rotate(45)"/><path d="M0 -1.5V-3.6" transform="rotate(90)"/><path d="M0 -1.5V-3.6" transform="rotate(135)"/><path d="M0 -1.5V-3.6" transform="rotate(180)"/><path d="M0 -1.5V-3.6" transform="rotate(225)"/><path d="M0 -1.5V-3.6" transform="rotate(270)"/><path d="M0 -1.5V-3.6" transform="rotate(315)"/><circle r="1.3" fill="#fff" stroke-width="0.8800000000000001"/></g></svg>
<svg style="left:343px;top:57px;" width="35" height="31"><rect x="1.3" y="12.3" width="30.8" height="15.2" fill="none" stroke="#bdbdbd" stroke-width="0.8"/><g fill="#8a8a8a"><rect x="0.6" y="11.6" width="1.4" height="1.4"/><rect x="31.4" y="11.6" width="1.4" height="1.4"/><rect x="0.6" y="26.8" width="1.4" height="1.4"/><rect x="31.4" y="26.8" width="1.4" height="1.4"/></g><text x="4" y="25.2" font-size="15" fill="#8d8d8d" font-family="'Liberation Sans',sans-serif" textLength="25.6" lengthAdjust="spacingAndGlyphs">ABC</text><path d="M27.6 2.2L30.6 5.2L15 20.6L11.2 21.6L12.2 17.8Z" fill="#3f7cc4"/><path d="M26.2 3.7L29.2 6.7" stroke="#f6f4f4" stroke-width="0.9"/></svg>
<svg style="left:386px;top:60px;" width="17" height="16"><g transform="translate(0.5 0)"><rect x="0.6" y="6.1" width="13.8" height="7.5" fill="#dde8f6"/><rect x="5.6" y="0.2" width="3.9" height="13.4" fill="#c7d7ed"/><path d="M3.6 10.4h1.6M9.9 10.4h1.6" stroke="#b9cae3" stroke-width="0.8"/></g></svg>
<svg style="left:387px;top:84px;" width="16" height="14"><g font-family="'Liberation Sans',sans-serif"><text x="0.3" y="5.6" font-size="6.9" fill="#8a8a8a" textLength="13" lengthAdjust="spacingAndGlyphs">ABC</text><text x="0" y="12" font-size="7.4" fill="#666" textLength="13.4" lengthAdjust="spacingAndGlyphs">123</text></g></svg>
<svg style="left:386px;top:106px;" width="18" height="17"><g transform="translate(0 0.5)"><text x="0.3" y="5.3" font-size="7.8" fill="#6f6f6f" font-family="'Liberation Sans',sans-serif" textLength="11.6" lengthAdjust="spacingAndGlyphs">abc</text><rect x="5.5" y="7" width="10.2" height="7.6" fill="#fff" stroke="#ababab" stroke-width="0.8"/><rect x="5.1" y="6.6" width="11" height="1.7" fill="#4a7ebb"/><path d="M5.5 10.5H15.7M5.5 12.6H15.7M8.9 8.3V14.6M12.3 8.3V14.6" stroke="#c2c2c2" stroke-width="0.7" fill="none"/><path d="M0.9 6.7Q0.9 10.2 4.8 10.2M3.2 8.3L5.2 10.2L3.2 12.1" fill="none" stroke="#3f7cc4" stroke-width="1.25"/></g></svg>
<svg style="left:508px;top:59px;" width="29" height="33"><g transform="translate(0 0.5)"><g font-family="'Liberation Sans',sans-serif" fill="#98a9c8"><text x="0.6" y="14.4" font-size="17.5" textLength="12.6" lengthAdjust="spacingAndGlyphs">X</text><rect x="0.4" y="0.4" width="12.8" height="1.1"/><text x="14" y="14.4" font-size="17.5" textLength="13" lengthAdjust="spacingAndGlyphs">σ</text><text x="8.2" y="30.4" font-size="19" textLength="12.6" lengthAdjust="spacingAndGlyphs">Σ</text></g></g></svg>
<svg style="left:555px;top:60px;" width="32" height="31"><g fill="#98a9c8"><rect x="0" y="0" width="14.5" height="14.3"/><rect x="15.8" y="0" width="14.5" height="14.3"/><rect x="0" y="15.6" width="14.5" height="14.3"/><rect x="15.8" y="15.6" width="14.5" height="14.3"/></g><path d="M7.2 2.8V11.6M2.8 7.2H11.6M18.4 7.2H27.6M2.4 22.7H12M19.2 18.6L27 26.8M27 18.6L19.2 26.8" stroke="#fff" stroke-width="1.2" fill="none"/><circle cx="7.2" cy="19.2" r="1.1" fill="#fff"/><circle cx="7.2" cy="26.3" r="1.1" fill="#fff"/></svg>
<svg style="left:606px;top:63px;" width="28" height="25"><g font-family="'Liberation Sans',sans-serif" fill="#98a9c8"><text x="0.2" y="21.6" font-size="20.5" textLength="19.6" lengthAdjust="spacingAndGlyphs">10</text><text x="19.4" y="10.4" font-size="11.8" stroke="#98a9c8" stroke-width="0.3">2</text></g></svg>
<svg style="left:648px;top:59px;" width="17" height="17"><g transform="translate(0 0.5)"><path d="M14.9 0.4V14.6H0.6Z" fill="#e8eff9" stroke="#b9c9e3" stroke-width="1"/><path d="M11 14.4V11.2H14.6M4.4 14.2Q4.6 12.6 3.6 11.8" fill="none" stroke="#bccbe4" stroke-width="0.8"/></g></svg>
<svg style="left:648px;top:82px;" width="17" height="17"><g transform="translate(0 0.5)"><g font-family="'Liberation Sans',sans-serif" fill="#98a9c8"><text x="2.2" y="6.6" font-size="8.6" textLength="12.8" lengthAdjust="spacingAndGlyphs">.00</text><text x="7.4" y="14.6" font-size="8.6" textLength="7.6" lengthAdjust="spacingAndGlyphs">.0</text></g><path d="M0.4 11.4H6M3.7 8.8L6.3 11.4L3.7 14" fill="none" stroke="#98a9c8" stroke-width="1.2"/></g></svg>
<svg style="left:648px;top:105px;" width="17" height="18"><g transform="translate(0 0.8)"><rect x="0.4" y="0.4" width="14.4" height="14.6" fill="#d6e1f2" stroke="#c3d2ea" stroke-width="0.8"/><rect x="6.3" y="0.8" width="8.1" height="13.8" fill="#e9f0fa"/><path d="M0.4 7.7H14.8M6.3 0.4V15" stroke="#c3d2ea" stroke-width="0.8"/><g font-family="'Liberation Sans',sans-serif" font-size="6" fill="#a9b9d6"><text x="1.8" y="6.2">1</text><text x="1.8" y="13.6">3</text></g><path d="M8.6 4.1H12.6M8.6 11.4H12.6M10.6 9.4V13.4" stroke="#a9b9d6" stroke-width="0.8"/></g></svg>
<svg style="left:763px;top:61px;" width="32" height="30"><rect x="0.5" y="0.5" width="29.3" height="27.6" fill="#fff" stroke="#b9b9b9"/><rect x="0" y="0" width="30.3" height="4.4" fill="#7f7f7f"/><path d="M0.5 8.3H29.8M0.5 12.9H29.8M0.5 17.8H29.8M0.5 22.7H29.8M5.3 4.4V28M10.3 4.4V28M15.3 4.4V28M20.2 4.4V28M25.1 4.4V28" stroke="#d2d2d2" stroke-width="0.9" fill="none"/><rect x="19.8" y="8.6" width="4.8" height="4.8" fill="#fff" stroke="#ee9f62" stroke-width="1"/></svg>
<svg style="left:808px;top:60px;" width="32" height="32"><circle cx="15.1" cy="15.3" r="14.4" fill="#fff" stroke="#86a6cf" stroke-width="1.1"/><path d="M15.4 4.4V15.6H23.2" fill="none" stroke="#7d7d7d" stroke-width="1.3"/></svg>
<svg style="left:857px;top:61px;" width="27" height="29"><circle cx="12.6" cy="16" r="10.8" fill="#e9f0fa" stroke="#aebfdd" stroke-width="1"/><path d="M9.6 1.4H15.8M12.7 1.4V5.2" stroke="#9fb2d4" stroke-width="1.5" fill="none"/><path d="M12.8 8.6V16.8H17.6" fill="none" stroke="#b9c7e1" stroke-width="1"/><circle cx="12.60" cy="7.20" r="0.45" fill="#aebfdd"/><circle cx="17.00" cy="8.38" r="0.45" fill="#aebfdd"/><circle cx="20.22" cy="11.60" r="0.45" fill="#aebfdd"/><circle cx="21.40" cy="16.00" r="0.45" fill="#aebfdd"/><circle cx="20.22" cy="20.40" r="0.45" fill="#aebfdd"/><circle cx="17.00" cy="23.62" r="0.45" fill="#aebfdd"/><circle cx="12.60" cy="24.80" r="0.45" fill="#aebfdd"/><circle cx="8.20" cy="23.62" r="0.45" fill="#aebfdd"/><circle cx="4.98" cy="20.40" r="0.45" fill="#aebfdd"/><circle cx="3.80" cy="16.00" r="0.45" fill="#aebfdd"/><circle cx="4.98" cy="11.60" r="0.45" fill="#aebfdd"/><circle cx="8.20" cy="8.38" r="0.45" fill="#aebfdd"/></svg>
<div style="left:0;top:0px;width:2048px;height:1px;background:repeating-linear-gradient(90deg,rgba(105,250,105,0.8) 0,rgba(105,250,105,0.8) 5.3px,transparent 5.3px,transparent 13.35px);background-position:13.1px 0;"></div>
<div style="left:0;top:1101px;width:2048px;height:1px;background:repeating-linear-gradient(90deg,rgba(60,215,85,0.75) 0,rgba(60,215,85,0.75) 5.3px,transparent 5.3px,transparent 13.35px);background-position:13.1px 0;"></div>
<div style="left:0px;top:0;width:1px;height:1102px;background:repeating-linear-gradient(180deg,rgba(105,250,105,0.62) 0,rgba(105,250,105,0.62) 5.3px,transparent 5.3px,transparent 13.35px);background-position:0 1.0px;"></div>
<div style="left:2047px;top:0;width:1px;height:1102px;background:repeating-linear-gradient(180deg,rgba(105,250,105,0.62) 0,rgba(105,250,105,0.62) 5.3px,transparent 5.3px,transparent 13.35px);background-position:0 1.0px;"></div>
<div style="left:-0.6px;top:-0.6px;width:3.8px;height:3.8px;background:#fff;border:1px solid #858585;"></div>
<div style="left:-0.6px;top:548px;width:3.8px;height:3.8px;background:#fff;border:1px solid #858585;"></div>
<div style="left:-0.6px;top:1096.6px;width:3.8px;height:3.8px;background:#fff;border:1px solid #858585;"></div>
<div style="left:1021px;top:-0.6px;width:3.8px;height:3.8px;background:#fff;border:1px solid #858585;"></div>
<div style="left:1021px;top:1096.6px;width:3.8px;height:3.8px;background:#fff;border:1px solid #858585;"></div>
<div style="left:2042.3px;top:-0.6px;width:3.8px;height:3.8px;background:#fff;border:1px solid #858585;"></div>
<div style="left:2042.3px;top:548px;width:3.8px;height:3.8px;background:#fff;border:1px solid #858585;"></div>
<div style="left:2042.3px;top:1096.6px;width:3.8px;height:3.8px;background:#fff;border:1px solid #858585;"></div>
<svg style="left:1016px;top:542px;" width="18" height="18"><g transform="translate(0.4 0.8)"><path d="M8 0.2L9.9 4.8Q10.6 5.6 11.4 6.1L15.8 8L11.4 9.8Q10.6 10.3 9.9 11.2L8 15.8L6.1 11.2Q5.4 10.3 4.6 9.8L0.2 8L4.6 6.1Q5.4 5.6 6.1 4.8Z" fill="#c3c8c4" opacity="0.95"/></g></svg>
<span id="t0" style="left:91px;top:7px;font-size:12.6px;color:#8c8c8c;transform:translateX(0.66px) scaleX(1.0034);transform-origin:0 0;">crossjoin - Power Query Editor</span>
<span id="t1" style="left:20px;top:32px;font-size:11.4px;color:#ffffff;transform:translateX(0.95px) scaleX(0.9047);transform-origin:0 0;">File</span>
<span id="t2" style="left:74px;top:32px;font-size:11.4px;color:#383838;transform:translateX(0.18px) scaleX(0.9813);transform-origin:0 0;">Home</span>
<span id="t3" style="left:135px;top:32px;font-size:11.4px;color:#383838;transform:translateX(0.16px) scaleX(0.9392);transform-origin:0 0;">Transform</span>
<span id="t4" style="left:214px;top:32px;font-size:11.4px;color:#383838;transform:translateX(0.98px) scaleX(0.9771);transform-origin:0 0;">Add Column</span>
<span id="t5" style="left:306px;top:32px;font-size:11.4px;color:#383838;transform:translateX(0.55px) scaleX(0.9076);transform-origin:0 0;">View</span>
<span id="t6" style="left:8px;top:99px;font-size:11.3px;color:#383838;transform:translateX(0.54px) scaleX(0.9791);transform-origin:0 0;">Column From</span>
<span id="t7" style="left:14px;top:115px;font-size:11.3px;color:#383838;transform:translateX(0.33px) scaleX(0.9427);transform-origin:0 0;">Examples</span>
<span id="t8" style="left:81px;top:99px;font-size:11.3px;color:#383838;transform:translateX(0.35px) scaleX(0.9627);transform-origin:0 0;">Custom</span>
<span id="t9" style="left:80px;top:115px;font-size:11.3px;color:#383838;transform:translateX(0.84px) scaleX(0.9809);transform-origin:0 0;">Column</span>
<span id="t10" style="left:124px;top:99px;font-size:11.3px;color:#383838;transform:translateX(0.99px) scaleX(0.9720);transform-origin:0 0;">Invoke Custom</span>
<span id="t11" style="left:140px;top:115px;font-size:11.3px;color:#383838;transform:translateX(0.49px) scaleX(0.9816);transform-origin:0 0;">Function</span>
<span id="t12" style="left:147px;top:137px;font-size:11.3px;color:#383838;transform:translateX(0.77px) scaleX(0.9391);transform-origin:0 0;">General</span>
<span id="t13" style="left:224px;top:63px;font-size:11.3px;color:#383838;transform:translateX(0.83px) scaleX(0.9981);transform-origin:0 0;">Conditional Column</span>
<span id="t14" style="left:224px;top:86px;font-size:11.3px;color:#383838;transform:translateX(0.67px) scaleX(0.9893);transform-origin:0 0;">Index Column</span>
<span id="t15" style="left:224px;top:109px;font-size:11.3px;color:#383838;transform:translateX(0.78px) scaleX(0.9943);transform-origin:0 0;">Duplicate Column</span>
<span id="t16" style="left:342px;top:99px;font-size:11.3px;color:#383838;transform:translateX(0.42px) scaleX(0.9463);transform-origin:0 0;">Format</span>
<span id="t17" style="left:405px;top:63px;font-size:11.3px;color:#a3a3a3;transform:translateX(0.99px) scaleX(0.9783);transform-origin:0 0;">Merge Columns</span>
<span id="t18" style="left:406px;top:86px;font-size:11.3px;color:#383838;transform:translateX(0.04px) scaleX(0.9313);transform-origin:0 0;">Extract</span>
<span id="t19" style="left:406px;top:109px;font-size:11.3px;color:#383838;transform:translateX(0.10px) scaleX(0.8653);transform-origin:0 0;">Parse</span>
<span id="t20" style="left:388px;top:137px;font-size:11.3px;color:#383838;transform:translateX(0.62px) scaleX(0.9512);transform-origin:0 0;">From Text</span>
<span id="t21" style="left:501px;top:99px;font-size:11.3px;color:#8c8c8c;transform:translateX(0.02px) scaleX(0.9305);transform-origin:0 0;">Statistics</span>
<span id="t22" style="left:548px;top:99px;font-size:11.3px;color:#8c8c8c;transform:translateX(0.71px) scaleX(0.9460);transform-origin:0 0;">Standard</span>
<span id="t23" style="left:597px;top:99px;font-size:11.3px;color:#8c8c8c;transform:translateX(0.21px) scaleX(0.9641);transform-origin:0 0;">Scientific</span>
<span id="t24" style="left:668px;top:63px;font-size:11.3px;color:#8c8c8c;transform:translateX(0.26px) scaleX(0.9613);transform-origin:0 0;">Trigonometry</span>
<span id="t25" style="left:667px;top:86px;font-size:11.3px;color:#8c8c8c;transform:translateX(0.60px) scaleX(0.9720);transform-origin:0 0;">Rounding</span>
<span id="t26" style="left:667px;top:109px;font-size:11.3px;color:#8c8c8c;transform:translateX(0.43px) scaleX(1.0304);transform-origin:0 0;">Information</span>
<span id="t27" style="left:587px;top:137px;font-size:11.3px;color:#383838;transform:translateX(0.18px) scaleX(0.9875);transform-origin:0 0;">From Number</span>
<span id="t28" style="left:766px;top:99px;font-size:11.3px;color:#383838;transform:translateX(0.30px) scaleX(0.9718);transform-origin:0 0;">Date</span>
<span id="t29" style="left:811px;top:99px;font-size:11.3px;color:#383838;transform:translateX(0.66px) scaleX(0.9403);transform-origin:0 0;">Time</span>
<span id="t30" style="left:847px;top:99px;font-size:11.3px;color:#8c8c8c;transform:translateX(0.86px) scaleX(1.0161);transform-origin:0 0;">Duration</span>
<span id="t31" style="left:778px;top:137px;font-size:11.3px;color:#383838;transform:translateX(0.78px) scaleX(0.9953);transform-origin:0 0;">From Date &amp; Time</span>
<span id="t32" style="left:22px;top:180px;font-size:19.6px;color:#468b69;transform:translateX(0.45px) scaleX(0.9197);transform-origin:0 0;-webkit-text-stroke:0.6px #fff;">Queries [4]</span>
<span id="t33" style="left:73px;top:215px;font-size:20.3px;color:#444444;transform:translateX(0.46px) scaleX(0.9450);transform-origin:0 0;">tasks</span>
<span id="t34" style="left:72px;top:257px;font-size:20.3px;color:#444444;transform:translateX(0.88px) scaleX(1.0172);transform-origin:0 0;">objects</span>
<span id="t35" style="left:72px;top:298px;font-size:20.3px;color:#444444;transform:translateX(0.40px) scaleX(1.0345);transform-origin:0 0;">programs</span>
<span id="t36" style="left:72px;top:340px;font-size:20.3px;color:#444444;transform:translateX(0.88px) scaleX(1.0116);transform-origin:0 0;">crossjoin</span>
<span id="t37" style="left:467px;top:179px;font-size:26px;color:#808080;font-family:'Liberation Serif', serif;font-style:italic;transform:translateX(1.00px) scaleX(1.0338);transform-origin:0 0;">fx</span>
<span id="t38" style="left:532px;top:186px;font-size:21.2px;color:#111;font-family:'Liberation Mono', monospace;transform:translateX(0.50px) scaleX(0.9005);transform-origin:0 0;">= Table.ExpandTableColumn(#&quot;Added Custom1&quot;, </span>
<span id="t39" style="left:1036px;top:186px;font-size:21.2px;color:#a31515;font-family:'Liberation Mono', monospace;transform:translateX(0.56px) scaleX(0.9005);transform-origin:0 0;">&quot;Object&quot;</span>
<span id="t40" style="left:1128px;top:186px;font-size:21.2px;color:#111;font-family:'Liberation Mono', monospace;transform:translateX(0.21px) scaleX(0.9005);transform-origin:0 0;">, {</span>
<span id="t41" style="left:1162px;top:186px;font-size:21.2px;color:#a31515;font-family:'Liberation Mono', monospace;transform:translateX(0.58px) scaleX(0.9005);transform-origin:0 0;">&quot;Object&quot;</span>
<span id="t42" style="left:1254px;top:186px;font-size:21.2px;color:#111;font-family:'Liberation Mono', monospace;transform:translateX(0.23px) scaleX(0.9005);transform-origin:0 0;">}, {</span>
<span id="t43" style="left:1300px;top:186px;font-size:21.2px;color:#a31515;font-family:'Liberation Mono', monospace;transform:translateX(0.05px) scaleX(0.9005);transform-origin:0 0;">&quot;Object.Object&quot;</span>
<span id="t44" style="left:1471px;top:186px;font-size:21.2px;color:#111;font-family:'Liberation Mono', monospace;transform:translateX(0.89px) scaleX(0.9005);transform-origin:0 0;">})</span>
<span id="t45" style="left:339px;top:280px;font-size:20.5px;color:#444444;transform:translateX(0.42px) scaleX(1.0000);transform-origin:0 0;">1</span>
<span id="t46" style="left:376px;top:281px;font-size:18.4px;color:#444444;transform:translateX(0.75px) scaleX(0.9424);transform-origin:0 0;">Excel</span>
<span id="t47" style="left:654px;top:281px;font-size:18.4px;color:#444444;transform:translateX(0.76px) scaleX(1.0314);transform-origin:0 0;">Adding</span>
<span id="t48" style="left:931px;top:281px;font-size:18.4px;color:#444444;transform:translateX(0.95px) scaleX(0.9656);transform-origin:0 0;">Cell</span>
<span id="t49" style="left:339px;top:317px;font-size:20.5px;color:#444444;transform:translateX(0.70px) scaleX(1.0000);transform-origin:0 0;">2</span>
<span id="t50" style="left:376px;top:317px;font-size:18.4px;color:#444444;transform:translateX(0.75px) scaleX(0.9424);transform-origin:0 0;">Excel</span>
<span id="t51" style="left:654px;top:317px;font-size:18.4px;color:#444444;transform:translateX(0.76px) scaleX(1.0314);transform-origin:0 0;">Adding</span>
<span id="t52" style="left:932px;top:317px;font-size:18.4px;color:#444444;transform:translateX(0.07px) scaleX(0.9505);transform-origin:0 0;">Range</span>
<span id="t53" style="left:339px;top:353px;font-size:20.5px;color:#444444;transform:translateX(0.76px) scaleX(1.0000);transform-origin:0 0;">3</span>
<span id="t54" style="left:376px;top:354px;font-size:18.4px;color:#444444;transform:translateX(0.75px) scaleX(0.9424);transform-origin:0 0;">Excel</span>
<span id="t55" style="left:654px;top:354px;font-size:18.4px;color:#444444;transform:translateX(0.76px) scaleX(1.0314);transform-origin:0 0;">Adding</span>
<span id="t56" style="left:933px;top:354px;font-size:18.4px;color:#444444;transform:translateX(0.17px) scaleX(1.0384);transform-origin:0 0;">Worksheet</span>
<span id="t57" style="left:339px;top:390px;font-size:20.5px;color:#444444;transform:translateX(0.76px) scaleX(1.0000);transform-origin:0 0;">4</span>
<span id="t58" style="left:376px;top:390px;font-size:18.4px;color:#444444;transform:translateX(0.75px) scaleX(0.9424);transform-origin:0 0;">Excel</span>
<span id="t59" style="left:654px;top:390px;font-size:18.4px;color:#444444;transform:translateX(0.76px) scaleX(1.0314);transform-origin:0 0;">Adding</span>
<span id="t60" style="left:933px;top:390px;font-size:18.4px;color:#444444;transform:translateX(0.17px) scaleX(1.0467);transform-origin:0 0;">Workbook</span>
<span id="t61" style="left:339px;top:426px;font-size:20.5px;color:#444444;transform:translateX(0.72px) scaleX(1.0000);transform-origin:0 0;">5</span>
<span id="t62" style="left:376px;top:427px;font-size:18.4px;color:#444444;transform:translateX(0.75px) scaleX(0.9424);transform-origin:0 0;">Excel</span>
<span id="t63" style="left:654px;top:427px;font-size:18.4px;color:#444444;transform:translateX(0.52px) scaleX(1.0482);transform-origin:0 0;">Deleting</span>
<span id="t64" style="left:931px;top:427px;font-size:18.4px;color:#444444;transform:translateX(0.95px) scaleX(0.9656);transform-origin:0 0;">Cell</span>
<span id="t65" style="left:339px;top:463px;font-size:20.5px;color:#444444;transform:translateX(0.63px) scaleX(1.0000);transform-origin:0 0;">6</span>
<span id="t66" style="left:376px;top:463px;font-size:18.4px;color:#444444;transform:translateX(0.75px) scaleX(0.9424);transform-origin:0 0;">Excel</span>
<span id="t67" style="left:654px;top:463px;font-size:18.4px;color:#444444;transform:translateX(0.52px) scaleX(1.0482);transform-origin:0 0;">Deleting</span>
<span id="t68" style="left:932px;top:463px;font-size:18.4px;color:#444444;transform:translateX(0.07px) scaleX(0.9505);transform-origin:0 0;">Range</span>
<span id="t69" style="left:339px;top:499px;font-size:20.5px;color:#444444;transform:translateX(0.69px) scaleX(1.0000);transform-origin:0 0;">7</span>
<span id="t70" style="left:376px;top:500px;font-size:18.4px;color:#444444;transform:translateX(0.75px) scaleX(0.9424);transform-origin:0 0;">Excel</span>
<span id="t71" style="left:654px;top:500px;font-size:18.4px;color:#444444;transform:translateX(0.52px) scaleX(1.0482);transform-origin:0 0;">Deleting</span>
<span id="t72" style="left:933px;top:500px;font-size:18.4px;color:#444444;transform:translateX(0.17px) scaleX(1.0384);transform-origin:0 0;">Worksheet</span>
<span id="t73" style="left:339px;top:535px;font-size:20.5px;color:#444444;transform:translateX(0.70px) scaleX(1.0000);transform-origin:0 0;">8</span>
<span id="t74" style="left:376px;top:536px;font-size:18.4px;color:#444444;transform:translateX(0.75px) scaleX(0.9424);transform-origin:0 0;">Excel</span>
<span id="t75" style="left:654px;top:536px;font-size:18.4px;color:#444444;transform:translateX(0.52px) scaleX(1.0482);transform-origin:0 0;">Deleting</span>
<span id="t76" style="left:933px;top:536px;font-size:18.4px;color:#444444;transform:translateX(0.17px) scaleX(1.0467);transform-origin:0 0;">Workbook</span>
<span id="t77" style="left:339px;top:572px;font-size:20.5px;color:#444444;transform:translateX(0.70px) scaleX(1.0000);transform-origin:0 0;">9</span>
<span id="t78" style="left:376px;top:572px;font-size:18.4px;color:#444444;transform:translateX(0.75px) scaleX(0.9424);transform-origin:0 0;">Excel</span>
<span id="t79" style="left:654px;top:572px;font-size:18.4px;color:#444444;transform:translateX(0.21px) scaleX(1.0873);transform-origin:0 0;">Modifying</span>
<span id="t80" style="left:931px;top:572px;font-size:18.4px;color:#444444;transform:translateX(0.95px) scaleX(0.9656);transform-origin:0 0;">Cell</span>
<span id="t81" style="left:334px;top:608px;font-size:20.5px;color:#444444;transform:translateX(0.47px) scaleX(0.9785);transform-origin:0 0;">10</span>
<span id="t82" style="left:376px;top:609px;font-size:18.4px;color:#444444;transform:translateX(0.75px) scaleX(0.9424);transform-origin:0 0;">Excel</span>
<span id="t83" style="left:654px;top:609px;font-size:18.4px;color:#444444;transform:translateX(0.21px) scaleX(1.0873);transform-origin:0 0;">Modifying</span>
<span id="t84" style="left:932px;top:609px;font-size:18.4px;color:#444444;transform:translateX(0.07px) scaleX(0.9505);transform-origin:0 0;">Range</span>
<span id="t85" style="left:334px;top:645px;font-size:20.5px;color:#444444;transform:translateX(0.33px) scaleX(1.0685);transform-origin:0 0;">11</span>
<span id="t86" style="left:376px;top:645px;font-size:18.4px;color:#444444;transform:translateX(0.75px) scaleX(0.9424);transform-origin:0 0;">Excel</span>
<span id="t87" style="left:654px;top:645px;font-size:18.4px;color:#444444;transform:translateX(0.21px) scaleX(1.0873);transform-origin:0 0;">Modifying</span>
<span id="t88" style="left:933px;top:645px;font-size:18.4px;color:#444444;transform:translateX(0.17px) scaleX(1.0384);transform-origin:0 0;">Worksheet</span>
<span id="t89" style="left:334px;top:681px;font-size:20.5px;color:#444444;transform:translateX(0.45px) scaleX(0.9896);transform-origin:0 0;">12</span>
<span id="t90" style="left:376px;top:682px;font-size:18.4px;color:#444444;transform:translateX(0.75px) scaleX(0.9424);transform-origin:0 0;">Excel</span>
<span id="t91" style="left:654px;top:682px;font-size:18.4px;color:#444444;transform:translateX(0.21px) scaleX(1.0873);transform-origin:0 0;">Modifying</span>
<span id="t92" style="left:933px;top:682px;font-size:18.4px;color:#444444;transform:translateX(0.17px) scaleX(1.0467);transform-origin:0 0;">Workbook</span>
<span id="t93" style="left:334px;top:718px;font-size:20.5px;color:#444444;transform:translateX(0.46px) scaleX(0.9833);transform-origin:0 0;">13</span>
<span id="t94" style="left:376px;top:718px;font-size:18.4px;color:#444444;transform:translateX(0.58px) scaleX(0.9906);transform-origin:0 0;">Google Sheets</span>
<span id="t95" style="left:654px;top:718px;font-size:18.4px;color:#444444;transform:translateX(0.76px) scaleX(1.0314);transform-origin:0 0;">Adding</span>
<span id="t96" style="left:931px;top:718px;font-size:18.4px;color:#444444;transform:translateX(0.95px) scaleX(0.9656);transform-origin:0 0;">Cell</span>
<span id="t97" style="left:334px;top:754px;font-size:20.5px;color:#444444;transform:translateX(0.49px) scaleX(0.9690);transform-origin:0 0;">14</span>
<span id="t98" style="left:376px;top:755px;font-size:18.4px;color:#444444;transform:translateX(0.58px) scaleX(0.9906);transform-origin:0 0;">Google Sheets</span>
<span id="t99" style="left:654px;top:755px;font-size:18.4px;color:#444444;transform:translateX(0.76px) scaleX(1.0314);transform-origin:0 0;">Adding</span>
<span id="t100" style="left:932px;top:755px;font-size:18.4px;color:#444444;transform:translateX(0.07px) scaleX(0.9505);transform-origin:0 0;">Range</span>
<span id="t101" style="left:334px;top:790px;font-size:20.5px;color:#444444;transform:translateX(0.47px) scaleX(0.9814);transform-origin:0 0;">15</span>
<span id="t102" style="left:376px;top:791px;font-size:18.4px;color:#444444;transform:translateX(0.58px) scaleX(0.9906);transform-origin:0 0;">Google Sheets</span>
<span id="t103" style="left:654px;top:791px;font-size:18.4px;color:#444444;transform:translateX(0.76px) scaleX(1.0314);transform-origin:0 0;">Adding</span>
<span id="t104" style="left:933px;top:791px;font-size:18.4px;color:#444444;transform:translateX(0.17px) scaleX(1.0384);transform-origin:0 0;">Worksheet</span>
<span id="t105" style="left:334px;top:827px;font-size:20.5px;color:#444444;transform:translateX(0.46px) scaleX(0.9833);transform-origin:0 0;">16</span>
<span id="t106" style="left:376px;top:827px;font-size:18.4px;color:#444444;transform:translateX(0.58px) scaleX(0.9906);transform-origin:0 0;">Google Sheets</span>
<span id="t107" style="left:654px;top:827px;font-size:18.4px;color:#444444;transform:translateX(0.76px) scaleX(1.0314);transform-origin:0 0;">Adding</span>
<span id="t108" style="left:933px;top:827px;font-size:18.4px;color:#444444;transform:translateX(0.17px) scaleX(1.0467);transform-origin:0 0;">Workbook</span>
<span id="t109" style="left:334px;top:863px;font-size:20.5px;color:#444444;transform:translateX(0.45px) scaleX(0.9896);transform-origin:0 0;">17</span>
<span id="t110" style="left:376px;top:864px;font-size:18.4px;color:#444444;transform:translateX(0.58px) scaleX(0.9906);transform-origin:0 0;">Google Sheets</span>
<span id="t111" style="left:654px;top:864px;font-size:18.4px;color:#444444;transform:translateX(0.52px) scaleX(1.0482);transform-origin:0 0;">Deleting</span>
<span id="t112" style="left:931px;top:864px;font-size:18.4px;color:#444444;transform:translateX(0.95px) scaleX(0.9656);transform-origin:0 0;">Cell</span>
<span id="t113" style="left:334px;top:900px;font-size:20.5px;color:#444444;transform:translateX(0.47px) scaleX(0.9828);transform-origin:0 0;">18</span>
<span id="t114" style="left:376px;top:900px;font-size:18.4px;color:#444444;transform:translateX(0.58px) scaleX(0.9906);transform-origin:0 0;">Google Sheets</span>
<span id="t115" style="left:654px;top:900px;font-size:18.4px;color:#444444;transform:translateX(0.52px) scaleX(1.0482);transform-origin:0 0;">Deleting</span>
<span id="t116" style="left:932px;top:900px;font-size:18.4px;color:#444444;transform:translateX(0.07px) scaleX(0.9505);transform-origin:0 0;">Range</span>
<span id="t117" style="left:334px;top:936px;font-size:20.5px;color:#444444;transform:translateX(0.46px) scaleX(0.9867);transform-origin:0 0;">19</span>
<span id="t118" style="left:376px;top:937px;font-size:18.4px;color:#444444;transform:translateX(0.58px) scaleX(0.9906);transform-origin:0 0;">Google Sheets</span>
<span id="t119" style="left:654px;top:937px;font-size:18.4px;color:#444444;transform:translateX(0.52px) scaleX(1.0482);transform-origin:0 0;">Deleting</span>
<span id="t120" style="left:933px;top:937px;font-size:18.4px;color:#444444;transform:translateX(0.17px) scaleX(1.0384);transform-origin:0 0;">Worksheet</span>
<span id="t121" style="left:335px;top:973px;font-size:20.5px;color:#444444;transform:translateX(0.02px) scaleX(0.9537);transform-origin:0 0;">20</span>
<span id="t122" style="left:376px;top:973px;font-size:18.4px;color:#444444;transform:translateX(0.58px) scaleX(0.9906);transform-origin:0 0;">Google Sheets</span>
<span id="t123" style="left:654px;top:973px;font-size:18.4px;color:#444444;transform:translateX(0.52px) scaleX(1.0482);transform-origin:0 0;">Deleting</span>
<span id="t124" style="left:933px;top:973px;font-size:18.4px;color:#444444;transform:translateX(0.17px) scaleX(1.0467);transform-origin:0 0;">Workbook</span>
<span id="t125" style="left:335px;top:1009px;font-size:20.5px;color:#444444;transform:translateX(0.01px) scaleX(0.9629);transform-origin:0 0;">21</span>
<span id="t126" style="left:376px;top:1010px;font-size:18.4px;color:#444444;transform:translateX(0.58px) scaleX(0.9906);transform-origin:0 0;">Google Sheets</span>
<span id="t127" style="left:654px;top:1010px;font-size:18.4px;color:#444444;transform:translateX(0.21px) scaleX(1.0873);transform-origin:0 0;">Modifying</span>
<span id="t128" style="left:931px;top:1010px;font-size:18.4px;color:#444444;transform:translateX(0.95px) scaleX(0.9656);transform-origin:0 0;">Cell</span>
<span id="t129" style="left:335px;top:1045px;font-size:20.5px;color:#444444;transform:translateX(0.01px) scaleX(0.9643);transform-origin:0 0;">22</span>
<span id="t130" style="left:376px;top:1046px;font-size:18.4px;color:#444444;transform:translateX(0.58px) scaleX(0.9906);transform-origin:0 0;">Google Sheets</span>
<span id="t131" style="left:654px;top:1046px;font-size:18.4px;color:#444444;transform:translateX(0.21px) scaleX(1.0873);transform-origin:0 0;">Modifying</span>
<span id="t132" style="left:932px;top:1046px;font-size:18.4px;color:#444444;transform:translateX(0.07px) scaleX(0.9505);transform-origin:0 0;">Range</span>
<span id="t133" style="left:412px;top:238px;font-size:17.8px;color:#3a3a3a;font-weight:bold;transform:translateX(0.59px) scaleX(1.0123);transform-origin:0 0;-webkit-text-stroke:0.2px #f0f0f0;">Program</span>
<span id="t134" style="left:691px;top:238px;font-size:17.8px;color:#3a3a3a;font-weight:bold;transform:translateX(0.10px) scaleX(0.9859);transform-origin:0 0;-webkit-text-stroke:0.2px #f0f0f0;">Task.Task</span>
<span id="t135" style="left:968px;top:238px;font-size:17.8px;color:#353d38;font-weight:bold;transform:translateX(0.05px) scaleX(1.0292);transform-origin:0 0;-webkit-text-stroke:0.2px #9fd5b7;">Object.Object</span>
<span id="t136" style="left:9px;top:1075px;font-size:19.7px;color:#fff;transform:translateX(0.02px) scaleX(0.9076);transform-origin:0 0;">3 COLUMNS, 24 ROWS</span>
<span id="t137" style="left:230px;top:1075px;font-size:19.7px;color:#fff;transform:translateX(0.92px) scaleX(0.9816);transform-origin:0 0;">Column profiling based on top 1000 rows</span>
<span id="t138" style="left:1714px;top:1075px;font-size:19.7px;color:#fff;transform:translateX(0.62px) scaleX(0.9138);transform-origin:0 0;">PREVIEW DOWNLOADED AT 10:06 AM</span>
<span id="t139" style="left:1615px;top:187px;font-size:34.3px;color:#1f7144;transform:translateX(0.68px) scaleX(0.9358);transform-origin:0 0;-webkit-text-stroke:1.1px #fff;">Query Settings</span>
<span id="t140" style="left:1631px;top:261px;font-size:20.5px;color:#217346;font-weight:bold;transform:translateX(0.85px) scaleX(0.9125);transform-origin:0 0;">PROPERTIES</span>
<span id="t141" style="left:1631px;top:436px;font-size:20.5px;color:#217346;font-weight:bold;transform:translateX(0.43px) scaleX(0.9181);transform-origin:0 0;">APPLIED STEPS</span>
<span id="t142" style="left:1631px;top:296px;font-size:20.5px;color:#444444;transform:translateX(0.43px) scaleX(0.9944);transform-origin:0 0;">Name</span>
<span id="t143" style="left:1641px;top:334px;font-size:19.3px;color:#585858;transform:translateX(0.59px) scaleX(0.9905);transform-origin:0 0;">crossjoin</span>
<span id="t144" style="left:1631px;top:377px;font-size:20.3px;color:#2e5c9e;transform:translateX(0.86px) scaleX(1.0064);transform-origin:0 0;">All Properties</span>
<span id="t145" style="left:1668px;top:480px;font-size:20.5px;color:#444444;transform:translateX(0.01px) scaleX(0.9555);transform-origin:0 0;">Source</span>
<span id="t146" style="left:1667px;top:515px;font-size:20.5px;color:#444444;transform:translateX(0.87px) scaleX(0.9901);transform-origin:0 0;">Changed Type</span>
<span id="t147" style="left:1668px;top:549px;font-size:20.5px;color:#444444;transform:translateX(0.86px) scaleX(1.0074);transform-origin:0 0;">Added Custom</span>
<span id="t148" style="left:1667px;top:584px;font-size:20.5px;color:#444444;transform:translateX(0.27px) scaleX(0.9695);transform-origin:0 0;">Expanded Task</span>
<span id="t149" style="left:1668px;top:619px;font-size:20.5px;color:#444444;transform:translateX(0.86px) scaleX(0.9975);transform-origin:0 0;">Added Custom1</span>
<span id="t150" style="left:1667px;top:653px;font-size:20.5px;color:#444444;transform:translateX(0.23px) scaleX(0.9907);transform-origin:0 0;">Expanded Object</span>
</body></html>
